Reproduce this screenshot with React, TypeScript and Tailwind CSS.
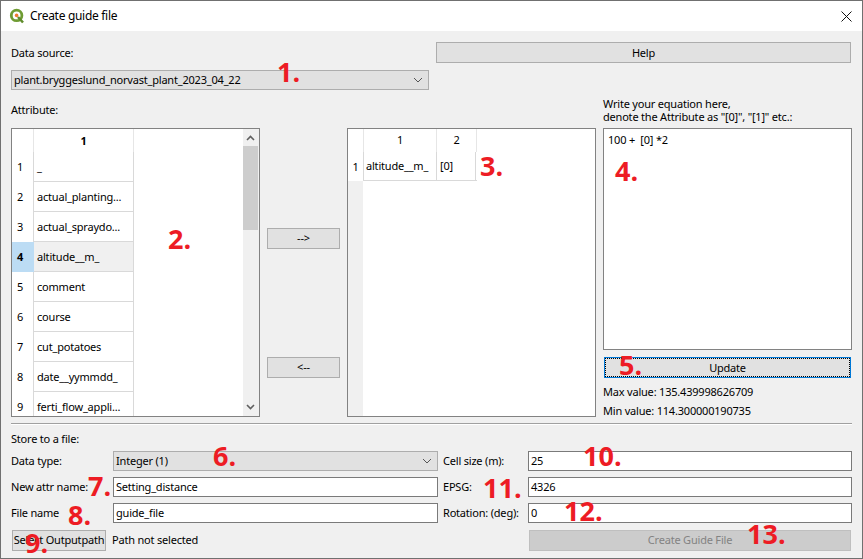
import React from "react";

const attributes = [
  "_",
  "actual_planting...",
  "actual_spraydo...",
  "altitude__m_",
  "comment",
  "course",
  "cut_potatoes",
  "date__yymmdd_",
  "ferti_flow_appli...",
];

const marks = [
  { text: "1.", cls: "left-[276px] top-[54px]" },
  { text: "2.", cls: "left-[167px] top-[221px]" },
  { text: "3.", cls: "left-[479px] top-[148px]" },
  { text: "4.", cls: "left-[614px] top-[153px]" },
  { text: "5.", cls: "left-[618px] top-[347px]" },
  { text: "6.", cls: "left-[212px] top-[438px]" },
  { text: "7.", cls: "left-[87px] top-[468px]" },
  { text: "8.", cls: "left-[67px] top-[497px]" },
  { text: "9.", cls: "left-[24px] top-[525px]" },
  { text: "10.", cls: "left-[582px] top-[438px]" },
  { text: "11.", cls: "left-[482px] top-[470px]" },
  { text: "12.", cls: "left-[563px] top-[493px]" },
  { text: "13.", cls: "left-[746px] top-[516px]" },
];

const QgisLogo = () => (
  <svg width="16" height="16" viewBox="0 0 16 16" fill="none">
    <circle cx="7.6" cy="7.4" r="5.3" stroke="#6f9c33" strokeWidth="2.8" />
    <path d="M9 9l5 5.5" stroke="#5f8c2b" strokeWidth="2.6" />
    <circle cx="7.6" cy="7.4" r="1.8" fill="#ee7b2f" />
  </svg>
);

const Chevron = ({ up }: { up?: boolean }) => (
  <svg width="9" height="6" viewBox="0 0 9 6" fill="none">
    <path d={up ? "M1 5l3.5-3.5L8 5" : "M1 1l3.5 3.5L8 1"} stroke="#606060" strokeWidth="1.6" />
  </svg>
);

const Button = ({ children, className = "" }: { children: React.ReactNode; className?: string }) => (
  <div className={`flex items-center justify-center whitespace-nowrap border border-[#adadad] bg-[#e1e1e1] ${className}`}>
    {children}
  </div>
);

const Combo = ({ text, className = "" }: { text: string; className?: string }) => (
  <div className={`flex h-[20px] items-center justify-between border border-[#adadad] bg-[#e1e1e1] pl-[2px] pr-[5px] ${className}`}>
    <span>{text}</span>
    <svg width="10" height="6" viewBox="0 0 10 6" fill="none">
      <path d="M1 1l4 4 4-4" stroke="#555555" strokeWidth="1" />
    </svg>
  </div>
);

const Input = ({ text }: { text: string }) => (
  <div className="flex h-[20px] items-center border border-[#7a7a7a] bg-white pl-[2px] pt-px">{text}</div>
);

export default function App() {
  return (
    <div
      className="relative flex h-[559px] w-[863px] flex-col overflow-hidden border border-[#707070] bg-[#f0f0f0] text-[11px] tracking-[-0.2px] text-black"
      style={{ fontFamily: '"Noto Sans", sans-serif' }}
    >
      {/* title bar */}
      <div className="flex h-[30px] shrink-0 items-center bg-white pl-[8px] pr-[10px]">
        <QgisLogo />
        <span className="ml-[5px] flex-1 text-[12px] tracking-[-0.3px]">Create guide file</span>
        <svg width="11" height="11" viewBox="0 0 11 11" fill="none">
          <path d="M.5.5l10 10M10.5.5l-10 10" stroke="#111111" />
        </svg>
      </div>

      <div className="flex flex-1 flex-col px-[10px]">
        {/* data source + help */}
        <div className="mt-[11px] flex justify-between">
          <div className="w-[418px]">
            <div className="flex h-[21px] items-center pt-px">Data source:</div>
            <Combo text="plant.bryggeslund_norvast_plant_2023_04_22" className="mt-[7px]" />
          </div>
          <Button className="mr-px h-[21px] w-[415px] pt-px">Help</Button>
        </div>

        {/* attribute + equation */}
        <div className="mt-[7px] grid grid-cols-[249px_73px_249px_249px] grid-rows-[31px_289px] gap-x-[7px]">
          <div className="pt-[5px] leading-[16px]">Attribute:</div>
          <div />
          <div />
          <div className="leading-[13px]">
            Write your equation here,
            <br />
            denote the Attribute as "[0]", "[1]" etc.:
          </div>

          {/* source table */}
          <div className="relative overflow-hidden border border-[#828282] bg-white">
            <div className="flex h-[23px]">
              <div className="w-[22px] border-r border-[#e6e6e6]" />
              <div className="w-[100px] border-r border-[#e6e6e6] pt-[4px] text-center font-bold">1</div>
            </div>
            {attributes.map((name, i) => (
              <div key={name} className="flex h-[30px]">
                <div
                  className={`flex w-[22px] items-center pl-[5px] pt-px ${
                    i === 3 ? "bg-[#bcdcf4] font-bold" : "border-r border-[#d9d9d9]"
                  }`}
                >
                  {i + 1}
                </div>
                <div
                  className={`flex w-[100px] items-center border-r border-b border-[#d9d9d9] pl-[3px] pt-px ${
                    i === 3 ? "bg-[#f0f0f0]" : ""
                  }`}
                >
                  {name}
                </div>
              </div>
            ))}
            <div className="absolute bottom-0 right-0 top-0 flex w-[16px] flex-col bg-[#f0f0f0] pr-px">
              <div className="flex h-[17px] items-center justify-center">
                <Chevron up />
              </div>
              <div className="h-[84px] bg-[#cdcdcd]" />
              <div className="flex flex-1 items-end justify-center pb-[6px]">
                <Chevron />
              </div>
            </div>
          </div>

          {/* move buttons */}
          <div className="flex flex-col items-center pt-[100px]">
            <Button className="h-[21px] w-[73px]">--&gt;</Button>
            <Button className="mt-[108px] h-[21px] w-[73px]">&lt;--</Button>
          </div>

          {/* target table */}
          <div className="flex border border-[#828282] bg-white">
            <div className="flex w-[15px] flex-col bg-[#f0f0f0]">
              <div className="h-[23px] bg-white" />
              <div className="flex h-[29px] items-center justify-center bg-white pt-px">1</div>
            </div>
            <div>
              <div className="flex h-[23px] border-r border-[#e6e6e6]">
                <div className="flex w-[74px] items-center justify-center border-x border-[#e6e6e6]">1</div>
                <div className="flex w-[39px] items-center justify-center">2</div>
              </div>
              <div className="flex h-[29px] border-b border-[#d9d9d9]">
                <div className="flex w-[74px] items-center border-x border-[#d9d9d9] pl-[2px] pt-px">altitude__m_</div>
                <div className="flex w-[39px] items-center border-r border-[#d9d9d9] pl-[3px] pt-px">[0]</div>
              </div>
            </div>
          </div>

          {/* equation panel */}
          <div className="flex flex-col">
            <div className="h-[222px] shrink-0 border border-[#828282] bg-white pl-[4px] pt-[3px]">100 +&nbsp; [0] *2</div>
            <div className="mx-px mt-[7px] h-[21px] shrink-0 border border-[#0078d7]">
              <div className="flex h-full items-center justify-center border border-dotted border-black bg-[#e1e1e1] pt-px">
                Update
              </div>
            </div>
            <div className="mt-[5px] flex h-[19px] shrink-0 items-center">Max value: 135.439998626709</div>
            <div className="flex h-[19px] shrink-0 items-center">Min value: 114.300000190735</div>
          </div>
        </div>

        <div className="mt-[6px] h-[2px] border-t border-[#a0a0a0] bg-white" />

        <div className="mt-[6px] flex h-[16px] items-center">Store to a file:</div>

        {/* output form */}
        <div className="mt-[4px] grid grid-cols-[102px_325px_90px_324px] gap-y-[6px]">
          <div className="flex items-center pt-px">Data type:</div>
          <Combo text="Integer (1)" />
          <div className="flex items-center pl-[5px] pt-px">Cell size (m):</div>
          <Input text="25" />

          <div className="flex items-center pt-px">New attr name:</div>
          <Input text="Setting_distance" />
          <div className="flex items-center pl-[5px] pt-px">EPSG:</div>
          <Input text="4326" />

          <div className="flex items-center pt-px">File name</div>
          <Input text="guide_file" />
          <div className="flex items-center pl-[5px] pt-px">Rotation: (deg):</div>
          <Input text="0" />
        </div>

        <div className="mt-[7px] flex">
          <Button className="ml-px h-[21px] w-[94px]">Select Outputpath</Button>
          <div className="ml-[6px] flex items-center">Path not selected</div>
          <div className="ml-auto mr-px flex h-[21px] w-[322px] items-center justify-center border border-[#bfbfbf] bg-[#cccccc] text-[#838383]">
            Create Guide File
          </div>
        </div>
      </div>

      {/* red annotations over the dialog */}
      {marks.map((m) => (
        <span
          key={m.text}
          className={`absolute text-[27px] font-bold leading-[34px] tracking-normal text-[#ed1c24] ${m.cls}`}
          style={{ fontFamily: '"Open Sans", sans-serif' }}
        >
          {m.text}
        </span>
      ))}
    </div>
  );
}
